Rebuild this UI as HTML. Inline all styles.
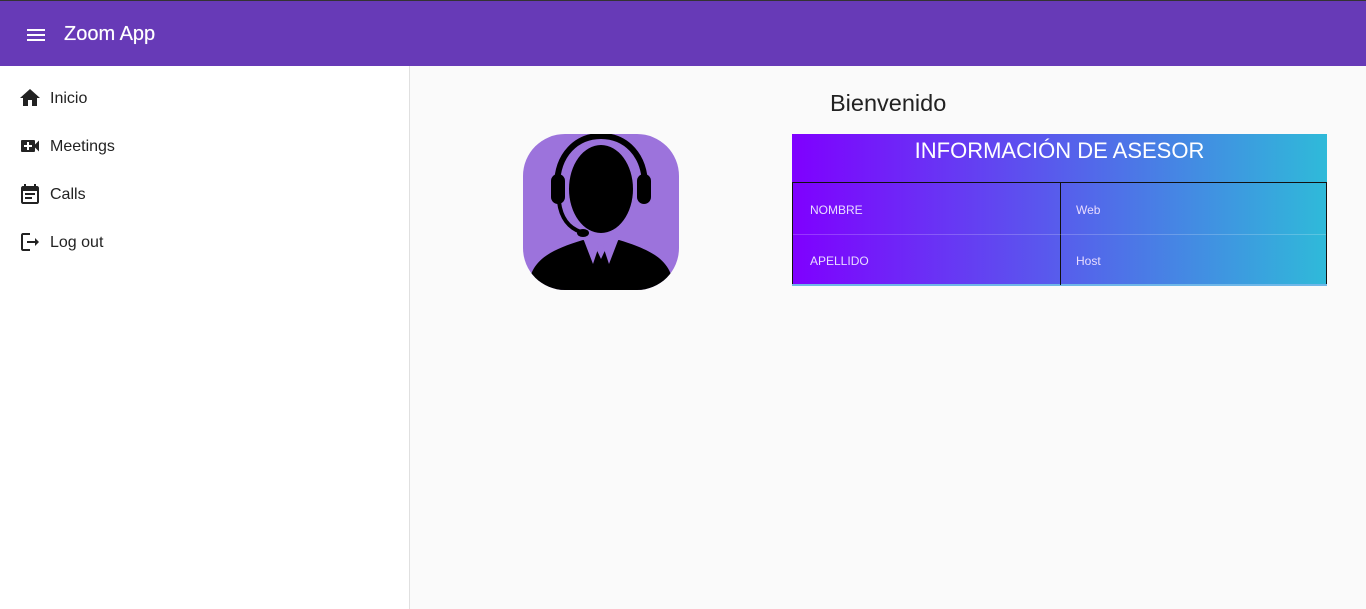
<!DOCTYPE html>
<html><head><meta charset="utf-8"><style>
*{margin:0;padding:0;box-sizing:border-box}
body{width:1366px;height:609px;overflow:hidden;background:#fafafa;font-family:"Liberation Sans",Roboto,sans-serif;position:relative}
.top{position:absolute;left:0;top:0;width:1366px;height:66px;background:#673ab7;border-top:1px solid #333}
.top .t{position:absolute;left:64px;top:22px;color:#fff;font-size:20px;font-weight:normal;text-shadow:0 0 .5px #fff}
.side{position:absolute;left:0;top:66px;width:410px;height:543px;background:#fff;border-right:1px solid #e0e0e0}
.item{position:absolute;left:50px;font-size:16px;color:#222}
.ic{position:absolute;left:18px}
.bien{position:absolute;left:830px;top:90px;font-size:23.5px;color:#222}
.tab{position:absolute;left:792px;top:134px;width:535px;height:152px;background:linear-gradient(90deg,#7f00ff,#2fbad9);border-bottom:2px solid #6fb7e8}
.tab .h{position:absolute;left:0;top:4px;width:100%;text-align:center;color:#fff;font-size:22px}
.grid{position:absolute;left:0;top:48px;width:535px;height:102px;border:1px solid #111;border-bottom:none}
.vl{position:absolute;left:267px;top:0;width:1px;height:102px;background:#111}
.hl{position:absolute;left:0;top:51px;width:100%;height:1px;background:rgba(255,255,255,.2)}
.c{position:absolute;font-size:12px;color:#e8dcff}
</style></head><body>
<div class="top">
<svg style="position:absolute;left:24px;top:22px" width="24" height="24" viewBox="0 0 24 24"><path fill="#fff" d="M3 18h18v-2H3v2zm0-5h18v-2H3v2zm0-7v2h18V6H3z"/></svg>
<div class="t">Zoom App</div></div>
<div class="side">
<svg class="ic" style="top:20px" width="24" height="24" viewBox="0 0 24 24"><path fill="#222" d="M10 20v-6h4v6h5v-8h3L12 3 2 12h3v8z"/></svg>
<div class="item" style="top:24px">Inicio</div>
<svg class="ic" style="top:68px" width="24" height="24" viewBox="0 0 24 24"><path fill="#222" d="M17 10.5V7c0-.55-.45-1-1-1H4c-.55 0-1 .45-1 1v10c0 .55.45 1 1 1h12c.55 0 1-.45 1-1v-3.5l4 4v-11l-4 4zM14 13h-3v3H9v-3H6v-2h3V8h2v3h3v2z"/></svg>
<div class="item" style="top:72px">Meetings</div>
<svg class="ic" style="top:116px" width="24" height="24" viewBox="0 0 24 24"><path fill="#222" d="M19 4h-1V2h-2v2H8V2H6v2H5c-1.1 0-2 .9-2 2v14c0 1.1.9 2 2 2h14c1.1 0 2-.9 2-2V6c0-1.1-.9-2-2-2zm0 16H5V9h14v11zM7 11h10v2H7zm0 4h7v2H7z"/></svg>
<div class="item" style="top:120px">Calls</div>
<svg class="ic" style="top:164px" width="24" height="24" viewBox="0 0 24 24"><path fill="#222" d="M5 5h7V3H5c-1.1 0-2 .9-2 2v14c0 1.1.9 2 2 2h7v-2H5V5zm16 7l-4-4v3H9v2h8v3l4-4z"/></svg>
<div class="item" style="top:168px">Log out</div>
</div>
<div class="bien">Bienvenido</div>
<svg style="position:absolute;left:523px;top:134px" width="156" height="156" viewBox="0 0 156 156">
<rect width="156" height="156" rx="42" fill="#9c73dc"/>
<clipPath id="cp"><rect width="156" height="156" rx="42"/></clipPath>
<g clip-path="url(#cp)">
<path d="M5 160 C5 130 20 118 60 106 L70 108 L78 125 L86 108 L96 106 C136 118 151 130 151 160 Z" fill="#000"/>
<path d="M60 104 L72 108 L78 112 L84 108 L96 104 L86 130 L80 112 L76 112 L70 130 Z" fill="#9c73dc"/>
</g>
<ellipse cx="78" cy="55" rx="32" ry="44" fill="#000"/>
<path d="M34 52 C34 20 54 2 78 2 C102 2 122 20 122 52" fill="none" stroke="#000" stroke-width="6"/>
<rect x="28" y="40" width="14" height="30" rx="7" fill="#000"/>
<rect x="114" y="40" width="14" height="30" rx="7" fill="#000"/>
<path d="M36 68 C38 84 46 94 58 98" fill="none" stroke="#000" stroke-width="4"/>
<ellipse cx="60" cy="99" rx="6" ry="4" fill="#000"/>
</svg>
<div class="tab"><div class="h">INFORMACIÓN DE ASESOR</div>
<div class="grid"><div class="vl"></div><div class="hl"></div>
<div class="c" style="left:17px;top:20px">NOMBRE</div>
<div class="c" style="left:283px;top:20px">Web</div>
<div class="c" style="left:17px;top:71px">APELLIDO</div>
<div class="c" style="left:283px;top:71px">Host</div>
</div></div>
</body></html>
